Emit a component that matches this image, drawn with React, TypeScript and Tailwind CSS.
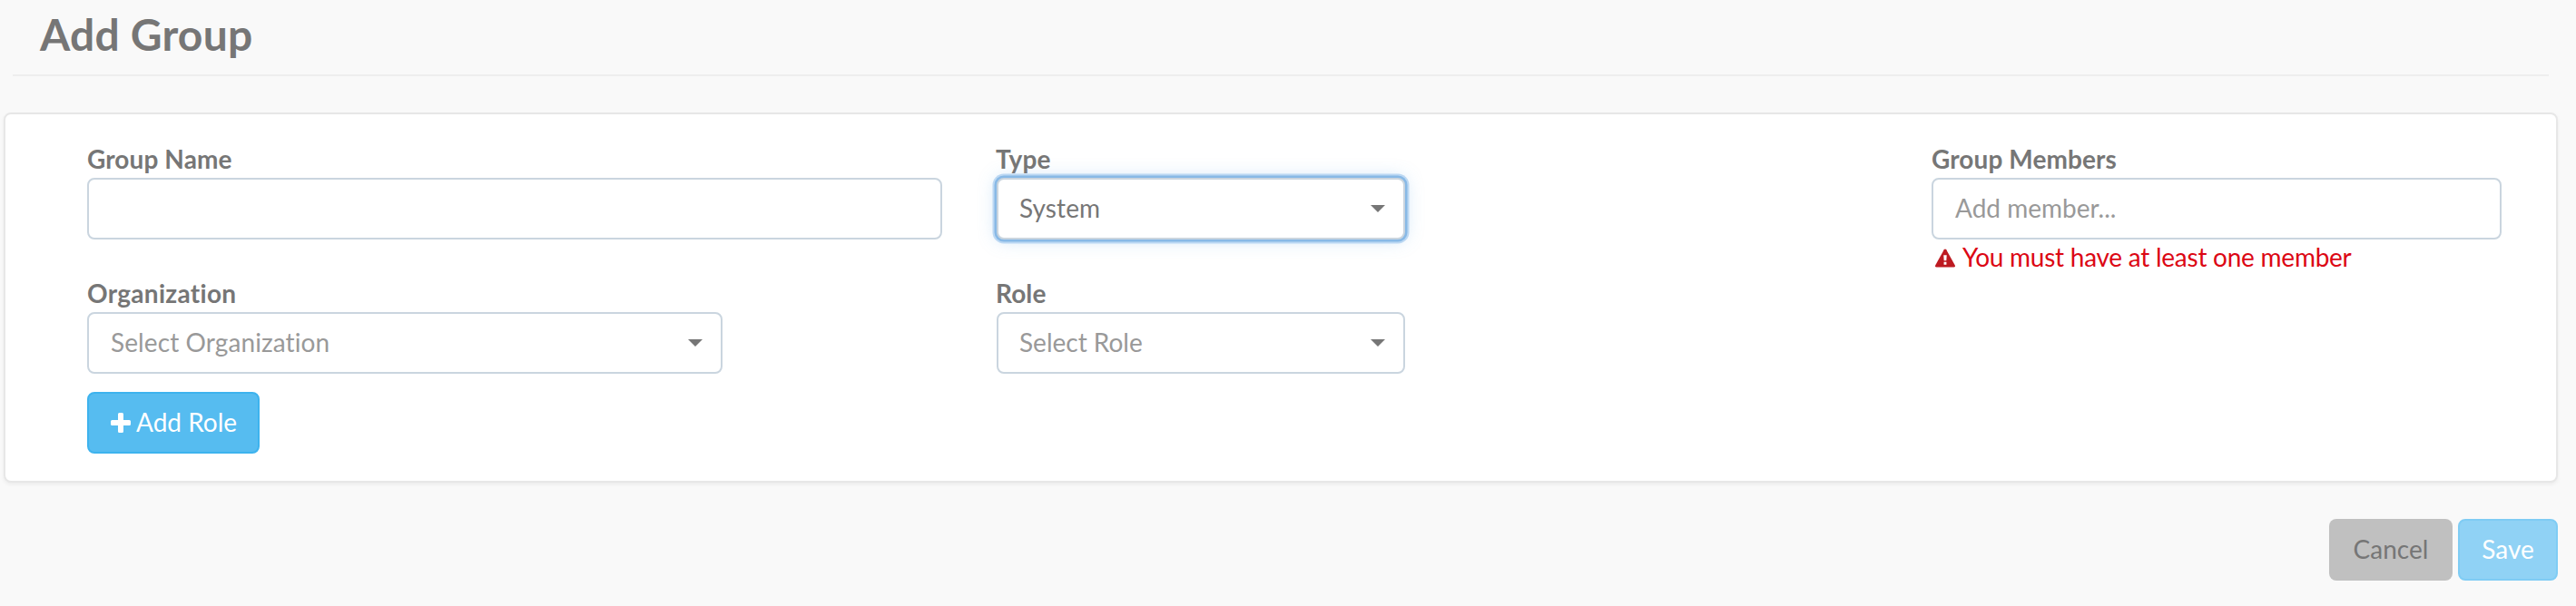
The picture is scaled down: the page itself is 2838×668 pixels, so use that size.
import type { ReactNode } from 'react';

function Label({ children }: { children: ReactNode }) {
  return <label className="relative z-10 -mt-px mb-px block h-10 text-[28px] leading-10 font-bold tracking-[0.1px] text-[#767676]">{children}</label>;
}

function Caret() {
  return (
    <svg className="h-2 w-4 fill-[#767676]" viewBox="0 0 16 8">
      <path d="M0 0h16l-8 8z" />
    </svg>
  );
}

function Select({ text, className }: { text: string; className: string }) {
  return (
    <div className={`flex h-[68px] items-center justify-between rounded-lg border-2 border-[#cad5df] bg-white pr-5 pl-6 ${className}`}>
      <span className="pb-0.5">{text}</span>
      <Caret />
    </div>
  );
}

export default function App() {
  return (
    <div className="flex h-[668px] w-[2838px] flex-col overflow-hidden bg-[#f9f9f9] font-[Lato,sans-serif] text-[28px] leading-10 text-[#767676]">
      <header className="mr-[30px] ml-[14px] h-[84px] border-b-2 border-[#eeeeee] pl-[30px]">
        <h1 className="pt-2 text-[48px] leading-[60px] font-bold tracking-[0.2px]">Add Group</h1>
      </header>
      <main className="mt-10 mr-5 ml-1 flex h-[408px] rounded-lg border-2 border-[#e7e7e7] bg-white pt-[30px] pl-[90px] shadow-[0_2px_4px_rgba(0,0,0,0.06)]">
        <section className="w-[1002px]">
          <Label>Group Name</Label>
          <div className="h-[68px] w-[942px] rounded-lg border-2 border-[#cad5df] bg-white" />
          <div className="mt-10">
            <Label><span className="tracking-[0.3px]">Organization</span></Label>
            <Select text="Select Organization" className="w-[700px] tracking-[0.1px] text-[#999999]" />
          </div>
          <button className="mt-5 flex h-[68px] w-[190px] items-center rounded-lg border-2 border-[#3db3ee] bg-[#56bcf0] pl-6 text-white">
            <svg className="mr-[6px] h-[22px] w-[22px] fill-white" viewBox="0 0 22 22">
              <path d="M9.5 0h3Q14 0 14 1.5V8h6.500Q22 8 22 9.500v3Q22 14 20.500 14H14v6.500Q14 22 12.500 22h-3Q8 22 8 20.500V14H1.500Q0 14 0 12.500v-3Q0 8 1.500 8H8V1.500Q8 0 9.500 0z" />
            </svg>
            <span className="pb-0.5">Add Role</span>
          </button>
        </section>
        <section className="w-[1030px]">
          <Label><span className="-ml-px">Type</span></Label>
          <Select text="System" className="w-[450px] pl-[23px] tracking-[0.1px] shadow-[0_0_0_2.5px_#88b9e6,0_0_0_4.5px_#bcd8f3,0_0_20px_rgba(102,175,233,0.35)]" />
          <div className="mt-10">
            <Label><span className="-ml-px">Role</span></Label>
            <Select text="Select Role" className="w-[450px] pl-[23px] text-[#999999]" />
          </div>
        </section>
        <section className="w-[628px]">
          <Label>Group Members</Label>
          <div className="flex h-[68px] items-center rounded-lg border-2 border-[#cad5df] bg-white px-6 pb-0.5 text-[#999999]">Add member...</div>
          <div className="flex items-center pl-1 text-[#dc0714]">
            <svg className="mr-2 h-[21px] w-[22px]" viewBox="0 0 23 21">
              <path fill="#bd1a21" d="M10.2.8q1.300-1.600 2.600 0L22.700 18.700q.8 2.300-1.400 2.300H1.700Q-.5 21 .3 18.700z" />
              <path fill="#fff" d="M9.700 7h3.600l-.4 6.500h-2.800zM10 15h3v3h-3z" />
            </svg>
            <span className="-mt-px mb-px tracking-[-0.25px]">You must have at least one member</span>
          </div>
        </section>
      </main>
      <footer className="mt-10 mr-5 flex justify-end gap-[6px]">
        <button className="h-[68px] w-[136px] rounded-lg bg-[#c0c0c0] pb-0.5">Cancel</button>
        <button className="h-[68px] w-[110px] rounded-lg border-2 border-[#7fccf4] bg-[#90d2f5] pb-0.5 text-white">Save</button>
      </footer>
    </div>
  );
}
